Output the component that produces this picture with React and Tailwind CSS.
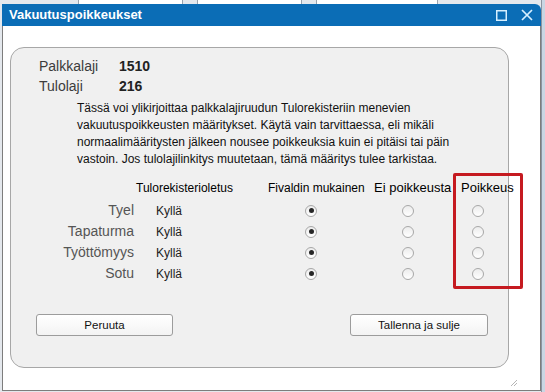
import React from 'react';

const rows = ['Tyel', 'Tapaturma', 'Työttömyys', 'Sotu'];

const Radio = ({ checked = false, className = '' }) => (
  <span
    className={`flex h-[12px] w-[12px] shrink-0 items-center justify-center rounded-full border border-[#a8a8a8] bg-gradient-to-b from-[#ececec] to-white ${className}`}
  >
    {checked && <span className="h-[5px] w-[5px] rounded-full bg-[#262626]" />}
  </span>
);

const Button = ({ children, className = '' }) => (
  <button
    className={`block h-[22px] shrink-0 rounded-[3px] border border-[#9c9c9c] bg-gradient-to-b from-white to-[#f3f3f3] text-[11.5px] leading-[20px] text-[#111] ${className}`}
  >
    {children}
  </button>
);

export default function App() {
  return (
    <div className="relative h-[392px] w-[545px] overflow-hidden bg-[#e4e8ed] font-['Liberation_Sans',Arial,sans-serif]">
      {/* app behind the dialog */}
      <div className="flex h-[4px] gap-[14px] pl-[78px]">
        <div className="w-[105px] border-x border-[#9aa3ad] bg-white" />
        <div className="w-[105px] border-x border-[#9aa3ad] bg-white" />
        <div className="w-[122px] border-x border-[#9aa3ad] bg-white" />
      </div>

      <div className="ml-[2px] flex w-[539px] flex-col">
        {/* title bar */}
        <div className="flex h-[22px] shrink-0 items-center justify-between rounded-tr-[6px] bg-[#0b6db6] pl-[7px] pr-[8px]">
          <span className="text-[13px] font-bold text-white">Vakuutuspoikkeukset</span>
          <div className="flex items-center gap-[14px]">
            <svg width="11" height="11" viewBox="0 0 11 11">
              <rect x="0.75" y="0.75" width="9.5" height="9.5" fill="none" stroke="#d6efff" strokeWidth="1.5" />
            </svg>
            <svg width="12" height="12" viewBox="0 0 12 12">
              <path d="M1 1 L11 11 M11 1 L1 11" stroke="#d6efff" strokeWidth="1.7" />
            </svg>
          </div>
        </div>

        {/* body */}
        <div className="relative h-[365px] shrink-0 border-x border-b border-[#7d7d7d] bg-white pl-[7px] pr-[31px] pt-[21px]">
          <div className="flex h-[321px] flex-col rounded-[14px] border border-[#a7a7a7] bg-[#f0f0f0]">
            <div className="mt-[8px] flex h-[20px] shrink-0 items-center pl-[28px] text-[14px]">
              <span className="w-[80px] text-[#3c3c3c]">Palkkalaji</span>
              <span className="font-bold text-[#222]">1510</span>
            </div>
            <div className="flex h-[20px] shrink-0 items-center pl-[28px] text-[14px]">
              <span className="w-[80px] text-[#3c3c3c]">Tulolaji</span>
              <span className="font-bold text-[#222]">216</span>
            </div>

            <p className="ml-[66px] mt-[4px] shrink-0 whitespace-nowrap text-[12px] leading-[17px] text-[#111]">
              Tässä voi ylikirjoittaa palkkalajiruudun Tulorekisteriin menevien
              <br />
              vakuutuspoikkeusten määritykset. Käytä vain tarvittaessa, eli mikäli
              <br />
              normaalimääritysten jälkeen nousee poikkeuksia kuin ei pitäisi tai päin
              <br />
              vastoin. Jos tulolajilinkitys muutetaan, tämä määritys tulee tarkistaa.
            </p>

            <div className="ml-[125px] mt-[11px] flex h-[18px] shrink-0 items-center whitespace-nowrap text-black">
              <span className="w-[132px] shrink-0 text-[12px]">Tulorekisterioletus</span>
              <span className="w-[106px] shrink-0 text-[12px]">Fivaldin mukainen</span>
              <span className="w-[87px] shrink-0 text-[13px]">Ei poikkeusta</span>
              <span className="shrink-0 text-[13px]">Poikkeus</span>
            </div>

            <div className="mt-[3px] flex shrink-0 flex-col">
              {rows.map((row) => (
                <div key={row} className="flex h-[21px] items-center">
                  <span className="w-[123px] shrink-0 text-right text-[14px] text-[#555]">{row}</span>
                  <span className="ml-[22px] w-[30px] shrink-0 text-[12px] text-[#222]">Kyllä</span>
                  <Radio checked className="ml-[119px]" />
                  <Radio className="ml-[85px]" />
                  <Radio className="ml-[58px]" />
                </div>
              ))}
            </div>

            <div className="mt-[30px] flex shrink-0 justify-between pl-[25px] pr-[20px]">
              <Button className="w-[137px]">Peruuta</Button>
              <Button className="w-[138px]">Tallenna ja sulje</Button>
            </div>
          </div>

          {/* resize grip */}
          <svg className="absolute bottom-[3px] right-[22px]" width="8" height="8" viewBox="0 0 8 8">
            <path d="M7 1 L1 7 M7 4 L4 7" stroke="#b5b5b5" strokeWidth="1" />
          </svg>
        </div>
      </div>

      {/* right edge of the app behind */}
      <div className="absolute right-0 top-0 h-full w-[4px] border-l border-[#8b95a1] bg-[#c9d6e3]" />

      {/* red highlight */}
      <div className="absolute left-[453px] top-[173px] h-[116px] w-[70px] rounded-[2px] border-[3px] border-[#c51a20]" />
    </div>
  );
}
